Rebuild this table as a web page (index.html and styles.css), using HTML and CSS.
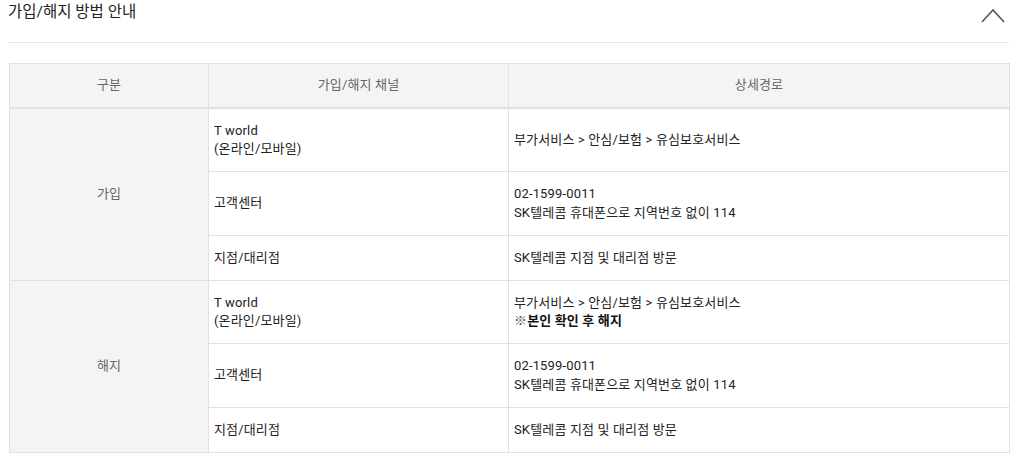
FILE: index.html
```html
<!DOCTYPE html>
<html lang="ko">
<head>
  <meta charset="UTF-8">
  <meta name="viewport" content="width=device-width, initial-scale=1.0">
  <title>가입/해지 방법 안내</title>
  <link rel="stylesheet" href="styles.css">
</head>
<body>

  <!-- 아코디언 섹션 -->
  <section class="guide">
    <div class="guide-head">
      <h2 class="guide-title">가입/해지 방법 안내</h2>
      <button class="guide-toggle" type="button" aria-label="접기">
        <svg width="24" height="16" viewBox="0 0 24 16">
          <polyline points="1,15 12,3 23,15" fill="none" stroke="#555" stroke-width="1.6"/>
        </svg>
      </button>
    </div>

    <!-- 가입/해지 채널 표 -->
    <table class="guide-table">
      <colgroup>
        <col class="col-type">
        <col class="col-channel">
        <col class="col-path">
      </colgroup>
      <thead>
        <tr>
          <th>구분</th>
          <th>가입/해지 채널</th>
          <th>상세경로</th>
        </tr>
      </thead>
      <tbody>
        <tr>
          <th rowspan="3" class="type">가입</th>
          <td>T world<br>(온라인/모바일)</td>
          <td>부가서비스 &gt; 안심/보험 &gt; 유심보호서비스</td>
        </tr>
        <tr>
          <td>고객센터</td>
          <td>02-1599-0011<br>SK텔레콤 휴대폰으로 지역번호 없이 114</td>
        </tr>
        <tr>
          <td>지점/대리점</td>
          <td>SK텔레콤 지점 및 대리점 방문</td>
        </tr>
        <tr>
          <th rowspan="3" class="type">해지</th>
          <td>T world<br>(온라인/모바일)</td>
          <td>부가서비스 &gt; 안심/보험 &gt; 유심보호서비스<br><span class="mark">※</span><strong>본인 확인 후 해지</strong></td>
        </tr>
        <tr>
          <td>고객센터</td>
          <td>02-1599-0011<br>SK텔레콤 휴대폰으로 지역번호 없이 114</td>
        </tr>
        <tr>
          <td>지점/대리점</td>
          <td>SK텔레콤 지점 및 대리점 방문</td>
        </tr>
      </tbody>
    </table>
  </section>

</body>
</html>
```

FILE: styles.css
```css
/* 기본 */
body {
  margin: 0;
  padding: 0 20px 0 9px;
  font-family: Roboto, "Noto Sans CJK KR", sans-serif;
  font-size: 13px;
  color: #222;
  background: #fff;
}

/* 상단 제목 영역 */
.guide-head {
  display: flex;
  align-items: flex-start;
  justify-content: space-between;
  height: 42px;
  border-bottom: 1px solid #e5e5e5;
  margin-bottom: 20px;
}

.guide-title {
  margin: 0;
  padding-top: 2px;
  margin-left: -1px;
  font-size: 15.5px;
  font-weight: normal;
  line-height: 20px;
  color: #222;
}

.guide-toggle {
  border: none;
  background: none;
  padding: 0;
  margin: 7px 4px 0 0;
  cursor: pointer;
  line-height: 0;
}

/* 표 */
.guide-table {
  width: 1000px;
  border-collapse: collapse;
  table-layout: fixed;
  line-height: 1.4;
  letter-spacing: 0.15px;
}

.col-type { width: 199px; }
.col-channel { width: 300px; }
.col-path { width: 501px; }

.guide-table th,
.guide-table td {
  border: 1px solid #e1e1e1;
  vertical-align: middle;
}

.guide-table thead th {
  height: 43px;
  padding: 0;
  background: #f4f4f4;
  color: #666;
  font-weight: normal;
  border-bottom: 2px solid #e1e1e1;
}

.guide-table .type {
  background: #f4f4f4;
  color: #666;
  font-weight: normal;
}

.guide-table td {
  padding: 13px 6px 13px 5px;
  text-align: left;
}

.mark {
  color: #555;
}

.guide-table strong {
  font-weight: bold;
  color: #111;
}
```
